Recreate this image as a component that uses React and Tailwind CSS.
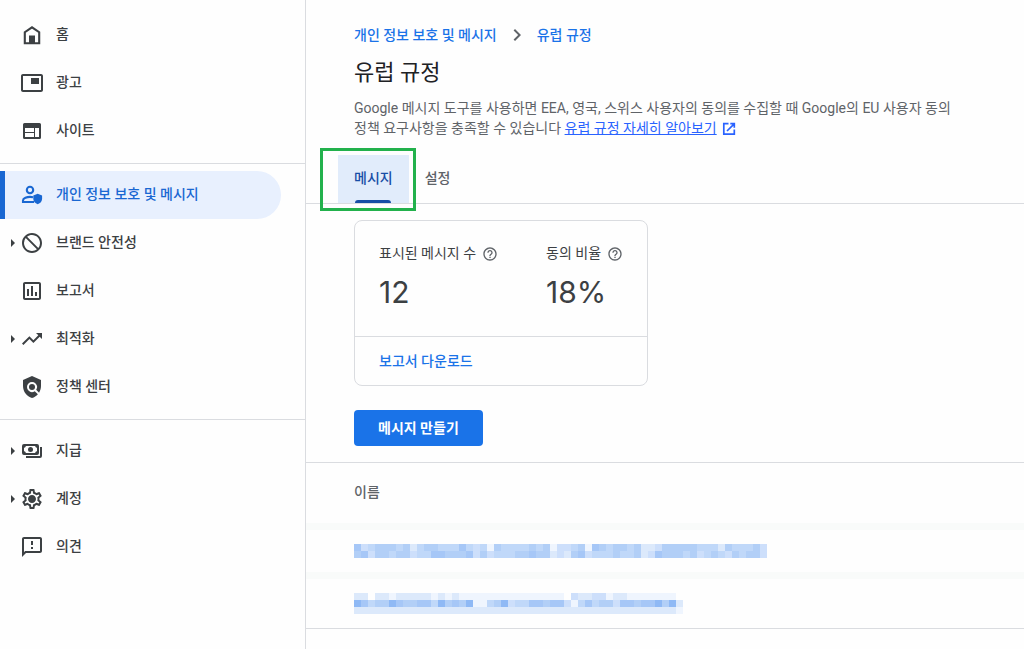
import {
  MdPictureInPicture,
  MdOutlineAssessment,
  MdTrendingUp,
  MdPolicy,
  MdOutlineSettings,
  MdOutlineFeedback,
  MdChevronRight,
  MdHelpOutline,
  MdBlock,
} from 'react-icons/md';

function HomeIcon() {
  return (
    <svg viewBox="0 0 24 24" className="size-6" aria-hidden="true">
      <path d="M4.800 20.200V9.200L12 4.300l7.200 4.900v11z" fill="none" stroke="currentColor" strokeWidth="2.100" />
      <path d="M9 12.500h6V20H9z" fill="currentColor" />
    </svg>
  );
}

function SitesIcon() {
  return (
    <svg viewBox="0 0 24 24" className="size-6" aria-hidden="true">
      <path
        fill="currentColor"
        fillRule="evenodd"
        d="M4.500 4h15A1.500 1.500 0 0 1 21 5.500v13a1.500 1.500 0 0 1-1.500 1.500h-15A1.500 1.500 0 0 1 3 18.500v-13A1.500 1.500 0 0 1 4.500 4zM5 9v4h9V9zM5 14v4h9v-4zM15 9v9h4V9z"
      />
    </svg>
  );
}

function PrivacyIcon() {
  return (
    <svg viewBox="0 0 24 24" className="size-6" aria-hidden="true">
      <circle cx="10" cy="7" r="3.200" fill="none" stroke="currentColor" strokeWidth="2.100" />
      <path
        d="M13 14.200C12 14 11 13.900 10 13.900c-2.800 0-7 1.200-7 3.600V19h11"
        fill="none"
        stroke="currentColor"
        strokeWidth="2.100"
      />
      <path d="M17.700 10.700l4.400 1.800v3.300c0 2.500-1.800 4.700-4.400 5.400-2.600-.7-4.400-2.900-4.400-5.400v-3.300z" fill="currentColor" />
    </svg>
  );
}

function PaymentsIcon() {
  return (
    <svg viewBox="0 0 24 24" className="size-6" aria-hidden="true">
      <rect x="3" y="6" width="15" height="9" rx="1" fill="none" stroke="currentColor" strokeWidth="2" />
      <path
        d="M3 6h3A3 3 0 0 1 3 9zM18 6v3A3 3 0 0 1 15 6zM18 15h-3A3 3 0 0 1 18 12zM3 15v-3A3 3 0 0 1 6 15z"
        fill="currentColor"
      />
      <circle cx="10.500" cy="10.500" r="2.500" fill="currentColor" />
      <path d="M21 8v9a1 1 0 0 1-1 1H6" fill="none" stroke="currentColor" strokeWidth="2" />
    </svg>
  );
}

function AccountIcon() {
  return (
    <svg viewBox="0 0 24 24" className="size-6" aria-hidden="true">
      <MdOutlineSettings size={24} />
      <circle cx="12" cy="12" r="3" fill="currentColor" />
    </svg>
  );
}

function ExternalIcon() {
  return (
    <svg
      viewBox="0 0 16 16"
      className="ml-1 inline size-4"
      fill="none"
      stroke="currentColor"
      strokeWidth="1.700"
      aria-hidden="true"
    >
      <path d="M7.500 2.700H2.800v10.500h10.500V8.500M9.300 2.700h4v4M13.200 2.800L6 10" />
    </svg>
  );
}

const groups = [
  [
    { label: '홈', icon: <HomeIcon /> },
    { label: '광고', icon: <MdPictureInPicture className="size-6" /> },
    { label: '사이트', icon: <SitesIcon /> },
  ],
  [
    { label: '개인 정보 보호 및 메시지', icon: <PrivacyIcon />, active: true },
    { label: '브랜드 안전성', icon: <MdBlock className="size-6 -scale-x-100" />, expandable: true },
    { label: '보고서', icon: <MdOutlineAssessment className="size-6" /> },
    { label: '최적화', icon: <MdTrendingUp className="size-6" />, expandable: true },
    { label: '정책 센터', icon: <MdPolicy className="size-6" /> },
  ],
  [
    { label: '지급', icon: <PaymentsIcon />, expandable: true },
    { label: '계정', icon: <AccountIcon />, expandable: true },
    { label: '의견', icon: <MdOutlineFeedback className="size-6" /> },
  ],
];

function NavItem({ label, icon, active, expandable }) {
  return (
    <li>
      <a
        href="#"
        aria-current={active ? 'page' : undefined}
        className={
          active
            ? 'mr-6 flex h-12 items-center rounded-r-full border-l-[5px] border-[#1967d2] bg-[#e8f0fe] text-[#1967d2]'
            : 'mr-6 flex h-12 items-center border-l-[5px] border-transparent text-[#3c4043]'
        }
      >
        <span className="flex w-[15px] justify-center">
          {expandable && (
            <svg viewBox="0 0 4 8" className="h-2 w-1" aria-hidden="true">
              <path d="M0 0l4 4-4 4z" fill="currentColor" />
            </svg>
          )}
        </span>
        {icon}
        <span className="ml-3 pb-0.5 text-sm font-medium">{label}</span>
      </a>
    </li>
  );
}

const shades = ['transparent', '#eff5fe', '#dce9fb', '#cddffb', '#c0d8f9', '#b2cff7', '#a6c7f7', '#8fb9f5'];

const messages = [
  [
    '63455545245544464341544445451334516545545223555554442544453',
    '56355455344665556353444556552325634445445236555453454354553',
  ],
  [
    '22022122222121211111111111111103223312211111110',
    '76455765566475657114573446656631464553665667572',
    '22222222222222222222222222222222222222222222221',
  ],
];

function MaskedName({ rows }) {
  const columns = rows[0].length;
  return (
    <svg
      width={columns * 7}
      height={rows.length * 7}
      shapeRendering="crispEdges"
      role="img"
      aria-label="메시지"
      className="block"
    >
      {rows.map((row, y) =>
        [...row].map((shade, x) => (
          <rect key={`${x}-${y}`} x={x * 7} y={y * 7} width="7" height="7" fill={shades[shade]} />
        ))
      )}
    </svg>
  );
}

function Stat({ label, value }) {
  return (
    <div>
      <div className="flex items-center gap-1.5 text-sm leading-5 text-[#3c4043]">
        {label}
        <MdHelpOutline className="mt-0.5 size-4 text-[#5f6368]" />
      </div>
      <div className="mt-[9px] font-['Inter','Noto_Sans_CJK_KR',sans-serif] text-3xl leading-10 text-[#3c4043]">
        {value}
      </div>
    </div>
  );
}

export default function App() {
  return (
    <div className="flex min-h-screen bg-[#fefefe] font-['Roboto','Noto_Sans_CJK_KR',sans-serif]">
      <nav className="w-[306px] shrink-0 border-r border-[#dadce0] pt-[11px]">
        {groups.map((items, i) => (
          <ul key={i} className={i ? 'mt-2 border-t border-[#dadce0] pt-[7px]' : ''}>
            {items.map((item) => (
              <NavItem key={item.label} {...item} />
            ))}
          </ul>
        ))}
      </nav>

      <main className="min-w-0 flex-1">
        <header className="px-12 pt-[23px]">
          <div className="flex items-center gap-2 text-sm font-medium text-[#1a73e8]">
            <a href="#">개인 정보 보호 및 메시지</a>
            <MdChevronRight className="size-6 text-[#5f6368]" />
            <a href="#">유럽 규정</a>
          </div>
          <h1 className="mt-3 text-[22px] leading-7 text-[#202124]">유럽 규정</h1>
          <p className="mt-[11px] text-sm break-keep text-[#5f6368]">
            Google 메시지 도구를 사용하면 EEA, 영국, 스위스 사용자의 동의를 수집할 때 Google의 EU 사용자 동의 정책
            요구사항을 충족할 수 있습니다{' '}
            <a href="#" className="text-[#2962ff] underline">
              유럽 규정 자세히 알아보기
              <ExternalIcon />
            </a>
          </p>
        </header>

        <div className="mt-[17px] flex border-b border-[#dadce0] px-8" role="tablist">
          <div className="relative">
            <button
              role="tab"
              aria-selected="true"
              className="flex h-12 flex-col items-center bg-[#e1ecfb] px-4 pt-[13px] text-sm font-medium text-[#174ea6]"
            >
              메시지
              <span className="mt-auto h-[3px] w-9 rounded-t bg-[#174ea6]" />
            </button>
            <span className="pointer-events-none absolute -top-[7px] -right-[7px] -bottom-2 -left-[18px] border-3 border-[#22b14c]" />
          </div>
          <button role="tab" aria-selected="false" className="h-12 px-4 pb-0.5 text-sm font-medium text-[#5f6368]">
            설정
          </button>
        </div>

        <div className="px-12 py-4">
          <section className="w-fit rounded-lg border border-[#dadce0]">
            <div className="flex gap-12 px-6 pt-[22px] pb-6">
              <Stat label="표시된 메시지 수" value="12" />
              <Stat label="동의 비율" value="18%" />
            </div>
            <div className="border-t border-[#dadce0] px-6 py-[14px] text-sm">
              <a href="#" className="block w-fit font-medium text-[#1a73e8]">
                보고서 다운로드
              </a>
            </div>
          </section>
          <button className="mt-6 h-9 rounded bg-[#1a73e8] px-6 text-sm font-bold text-white">메시지 만들기</button>
        </div>

        <table className="w-full border-y border-[#dadce0] text-left">
          <thead>
            <tr className="h-16">
              <th className="px-12 pb-0.5 text-sm font-medium text-[#5f6368]">이름</th>
            </tr>
          </thead>
          <tbody>
            {messages.map((rows, i) => (
              <tr key={i} className="border-t-[7px] border-[#f9fbfa]">
                <td className="px-12 py-[14px]">
                  <MaskedName rows={rows} />
                </td>
              </tr>
            ))}
          </tbody>
        </table>
      </main>
    </div>
  );
}
